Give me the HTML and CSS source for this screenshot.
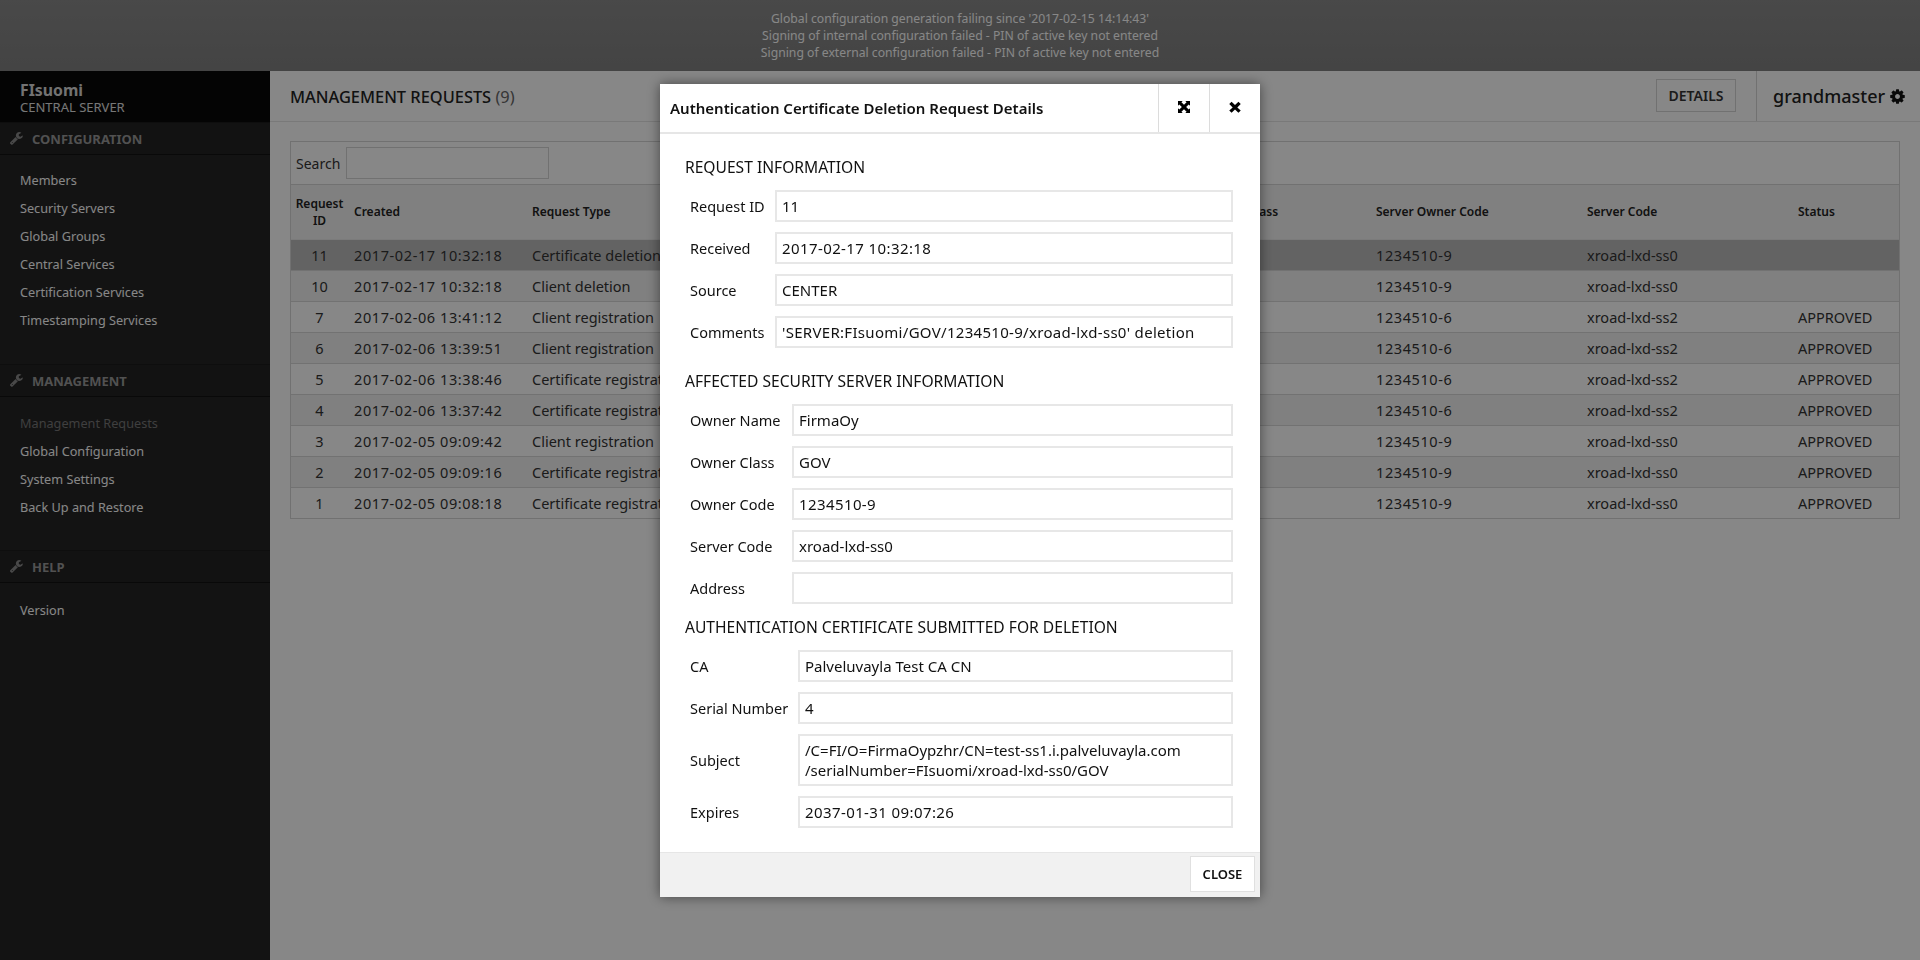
FILE: index.html
```html
<!DOCTYPE html>
<html lang="en">
<head>
  <meta charset="UTF-8" />
  <title>Management Requests</title>
  <link rel="stylesheet" href="styles.css">
</head>
<body>
  <div class="alerts">
    <div>Global configuration generation failing since '2017-02-15 14:14:43'</div>
    <div>Signing of internal configuration failed - PIN of active key not entered</div>
    <div>Signing of external configuration failed - PIN of active key not entered</div>
  </div>

  <div class="main">
    <aside class="sidebar">
      <div class="brand">
        <div class="brand-name">FIsuomi</div>
        <div class="brand-sub">CENTRAL SERVER</div>
      </div>

      <div class="nav-head">
        <svg class="wrench" viewBox="0 0 1664 1792"><path d="M363 1344q0-26-19-45t-45-19-45 19-19 45 19 45 45 19 45-19 19-45zm644-420l-682 682q-37 37-90 37-52 0-91-37l-106-108q-38-36-38-90 0-53 38-91l681-681q39 98 114.500 173.500t173.500 114.500zm634-435q0 39-23 106-47 134-164.500 217.500t-258.500 83.500q-185 0-316.500-131.500t-131.500-316.500 131.500-316.500 316.500-131.500q58 0 121.500 16.500t107.500 46.500q16 11 16 28t-16 28l-293 169v224l193 107q5-3 79-48.500t135.500-81 70.500-35.500q15 0 23.500 10t8.500 25z"/></svg>
        CONFIGURATION
      </div>
      <ul class="nav-list">
        <li>Members</li>
        <li>Security Servers</li>
        <li>Global Groups</li>
        <li>Central Services</li>
        <li>Certification Services</li>
        <li>Timestamping Services</li>
      </ul>

      <div class="nav-head">
        <svg class="wrench" viewBox="0 0 1664 1792"><path d="M363 1344q0-26-19-45t-45-19-45 19-19 45 19 45 45 19 45-19 19-45zm644-420l-682 682q-37 37-90 37-52 0-91-37l-106-108q-38-36-38-90 0-53 38-91l681-681q39 98 114.500 173.500t173.500 114.500zm634-435q0 39-23 106-47 134-164.500 217.500t-258.500 83.500q-185 0-316.500-131.500t-131.500-316.500 131.500-316.500 316.500-131.500q58 0 121.500 16.500t107.500 46.500q16 11 16 28t-16 28l-293 169v224l193 107q5-3 79-48.500t135.500-81 70.500-35.500q15 0 23.500 10t8.500 25z"/></svg>
        MANAGEMENT
      </div>
      <ul class="nav-list nav-mgmt">
        <li class="current">Management Requests</li>
        <li>Global Configuration</li>
        <li>System Settings</li>
        <li>Back Up and Restore</li>
      </ul>

      <div class="nav-head">
        <svg class="wrench" viewBox="0 0 1664 1792"><path d="M363 1344q0-26-19-45t-45-19-45 19-19 45 19 45 45 19 45-19 19-45zm644-420l-682 682q-37 37-90 37-52 0-91-37l-106-108q-38-36-38-90 0-53 38-91l681-681q39 98 114.500 173.500t173.500 114.500zm634-435q0 39-23 106-47 134-164.500 217.500t-258.500 83.500q-185 0-316.500-131.500t-131.500-316.500 131.500-316.500 316.500-131.500q58 0 121.500 16.500t107.500 46.500q16 11 16 28t-16 28l-293 169v224l193 107q5-3 79-48.500t135.500-81 70.500-35.500q15 0 23.500 10t8.500 25z"/></svg>
        HELP
      </div>
      <ul class="nav-list nav-help">
        <li>Version</li>
      </ul>
    </aside>

    <div class="content">
      <header class="content-head">
        <h1 class="page-title">MANAGEMENT REQUESTS <span class="count">(9)</span></h1>
        <button class="details-btn" type="button">DETAILS</button>
        <div class="user">
          grandmaster
          <svg class="gear" viewBox="0 0 1792 1792"><path d="M1152 896q0-106-75-181t-181-75-181 75-75 181 75 181 181 75 181-75 75-181zm512-109v222q0 12-8 23t-20 13l-185 28q-19 54-39 91 35 50 107 138 10 12 10 25t-9 23q-27 37-99 108t-94 71q-12 0-26-9l-138-108q-44 23-91 38-16 136-29 186-7 28-36 28h-222q-14 0-24.500-8.500t-11.500-21.500l-28-184q-49-16-90-37l-141 107q-10 9-25 9-14 0-25-11-126-114-165-168-7-10-7-23 0-12 8-23 15-21 51-66.500t54-70.500q-27-50-41-99l-183-27q-13-2-21-12.500t-8-23.500v-222q0-12 8-23t19-13l186-28q14-46 39-92-40-57-107-138-10-12-10-24 0-10 9-23 26-36 98.500-107.500t94.500-71.500q13 0 26 10l138 107q44-23 91-38 16-136 29-186 7-28 36-28h222q14 0 24.500 8.500t11.500 21.500l28 184q49 16 90 37l142-107q9-9 24-9 13 0 25 10 129 119 165 170 7 8 7 22 0 12-8 23-15 21-51 66.500t-54 70.500q26 50 41 98l183 28q13 2 21 12.500t8 23.500z"/></svg>
        </div>
      </header>

      <div class="panel">
        <div class="search-row">
          <label for="search">Search</label>
          <input id="search" class="search-input" type="text" />
        </div>
        <table class="requests">
          <colgroup>
            <col class="col-id"><col class="col-created"><col class="col-type"><col class="col-name"><col class="col-class"><col class="col-owner"><col class="col-server"><col class="col-status">
          </colgroup>
          <thead>
            <tr>
              <th class="id">Request ID</th><th>Created</th><th>Request Type</th><th>Server Owner Name</th><th>Server Owner Class</th><th>Server Owner Code</th><th>Server Code</th><th>Status</th>
            </tr>
          </thead>
          <tbody>
            <tr class="selected"><td class="id">11</td><td class="num">2017-02-17 10:32:18</td><td>Certificate deletion</td><td>FirmaOy</td><td>GOV</td><td class="num">1234510-9</td><td>xroad-lxd-ss0</td><td></td></tr>
            <tr><td class="id">10</td><td class="num">2017-02-17 10:32:18</td><td>Client deletion</td><td>FirmaOy</td><td>GOV</td><td class="num">1234510-9</td><td>xroad-lxd-ss0</td><td></td></tr>
            <tr><td class="id">7</td><td class="num">2017-02-06 13:41:12</td><td>Client registration</td><td>FirmaOy</td><td>GOV</td><td class="num">1234510-6</td><td>xroad-lxd-ss2</td><td>APPROVED</td></tr>
            <tr><td class="id">6</td><td class="num">2017-02-06 13:39:51</td><td>Client registration</td><td>FirmaOy</td><td>GOV</td><td class="num">1234510-6</td><td>xroad-lxd-ss2</td><td>APPROVED</td></tr>
            <tr><td class="id">5</td><td class="num">2017-02-06 13:38:46</td><td>Certificate registration</td><td>FirmaOy</td><td>GOV</td><td class="num">1234510-6</td><td>xroad-lxd-ss2</td><td>APPROVED</td></tr>
            <tr><td class="id">4</td><td class="num">2017-02-06 13:37:42</td><td>Certificate registration</td><td>FirmaOy</td><td>GOV</td><td class="num">1234510-6</td><td>xroad-lxd-ss2</td><td>APPROVED</td></tr>
            <tr><td class="id">3</td><td class="num">2017-02-05 09:09:42</td><td>Client registration</td><td>FirmaOy</td><td>GOV</td><td class="num">1234510-9</td><td>xroad-lxd-ss0</td><td>APPROVED</td></tr>
            <tr><td class="id">2</td><td class="num">2017-02-05 09:09:16</td><td>Certificate registration</td><td>FirmaOy</td><td>GOV</td><td class="num">1234510-9</td><td>xroad-lxd-ss0</td><td>APPROVED</td></tr>
            <tr><td class="id">1</td><td class="num">2017-02-05 09:08:18</td><td>Certificate registration</td><td>FirmaOy</td><td>GOV</td><td class="num">1234510-9</td><td>xroad-lxd-ss0</td><td>APPROVED</td></tr>
          </tbody>
        </table>
      </div>
    </div>
  </div>

  <div class="overlay">
    <div class="dialog">
      <div class="dialog-head">
        <div class="dialog-title">Authentication Certificate Deletion Request Details</div>
        <button class="icon-btn" type="button">
          <svg class="icon" viewBox="0 0 14 14"><path d="M0 0h5.500L4 1.500 7 4.500l3-3L8.500 0H14v5.500L12.500 4l-3 3 3 3L14 8.500V14H8.500l1.500-1.500-3-3-3 3L5.500 14H0V8.500L1.500 10l3-3-3-3L0 5.500z"/></svg>
        </button>
        <button class="icon-btn" type="button">
          <svg class="icon" viewBox="0 0 14 14"><path d="M3 .8 7 4.800l4-4L13.700 3.500l-4 4 4 3.500L11 13.700l-4-3.900-4 3.900L.3 11l4-3.500-4-4z"/></svg>
        </button>
      </div>

      <div class="dialog-body">
        <h2 class="section-title first">REQUEST INFORMATION</h2>
        <div class="field-grid grid-a">
          <div class="field-label">Request ID</div><div class="field-value">11</div>
          <div class="field-label">Received</div><div class="field-value num">2017-02-17 10:32:18</div>
          <div class="field-label">Source</div><div class="field-value">CENTER</div>
          <div class="field-label">Comments</div><div class="field-value mixed">'SERVER:FIsuomi/GOV/1234510-9/xroad-lxd-ss0' deletion</div>
        </div>

        <h2 class="section-title">AFFECTED SECURITY SERVER INFORMATION</h2>
        <div class="field-grid grid-b">
          <div class="field-label">Owner Name</div><div class="field-value">FirmaOy</div>
          <div class="field-label">Owner Class</div><div class="field-value">GOV</div>
          <div class="field-label">Owner Code</div><div class="field-value num">1234510-9</div>
          <div class="field-label">Server Code</div><div class="field-value">xroad-lxd-ss0</div>
          <div class="field-label">Address</div><div class="field-value"></div>
        </div>

        <h2 class="section-title">AUTHENTICATION CERTIFICATE SUBMITTED FOR DELETION</h2>
        <div class="field-grid grid-c">
          <div class="field-label">CA</div><div class="field-value">Palveluvayla Test CA CN</div>
          <div class="field-label">Serial Number</div><div class="field-value">4</div>
          <div class="field-label">Subject</div><div class="field-value tall">/C=FI/O=FirmaOypzhr/CN=test-ss1.i.palveluvayla.com<br>/serialNumber=FIsuomi/xroad-lxd-ss0/GOV</div>
          <div class="field-label">Expires</div><div class="field-value num">2037-01-31 09:07:26</div>
        </div>
      </div>

      <div class="dialog-foot">
        <button class="close-btn" type="button">CLOSE</button>
      </div>
    </div>
  </div>
</body>
</html>
```

FILE: styles.css
```css
* {
  box-sizing: border-box;
}
html, body {
  height: 100%;
}
body {
  margin: 0;
  height: 960px;
  overflow: hidden;
  font-family: "Noto Sans", sans-serif;
  font-size: 14px;
  color: #333;
  background: #fff;
  display: flex;
  flex-direction: column;
}

/* top alerts */
.alerts {
  height: 71px;
  padding-top: 10px;
  background: linear-gradient(#8a8a8a, #808080);
  color: #fff;
  text-align: center;
  font-size: 12.2px;
  line-height: 17px;
}

.main {
  flex: 1;
  display: flex;
  min-height: 0;
}

/* sidebar */
.sidebar {
  width: 270px;
  background: #252525;
  flex-shrink: 0;
}
.brand {
  height: 51px;
  padding: 9px 20px 0;
  background: #080808;
  color: #fff;
}
.brand-name {
  font-size: 15.8px;
  font-weight: 700;
  line-height: 20px;
  color: #d8d8d8;
}
.brand-sub {
  font-size: 13px;
  line-height: 15px;
  color: #e0e0e0;
}
.nav-head {
  height: 33px;
  display: flex;
  align-items: center;
  gap: 9px;
  padding-left: 10px;
  border-bottom: 1px solid #111;
  border-top: 1px solid #1b1b1b;
  background: #222;
  color: #9a9a9a;
  font-size: 13px;
  font-weight: 700;
}
.wrench {
  width: 13px;
  height: 14px;
  fill: #8a8a8a;
}
.nav-list {
  list-style: none;
  margin: 0;
  padding: 11px 0 30px 20px;
}
.nav-mgmt {
  padding-top: 12px;
  padding-bottom: 29px;
}
.nav-help {
  padding-top: 13px;
}
.nav-list li {
  height: 28px;
  line-height: 28px;
  font-size: 12.7px;
  color: #fff;
}
.nav-list li.current {
  color: #777;
}

/* content */
.content {
  flex: 1;
  min-width: 0;
}
.content-head {
  height: 51px;
  display: flex;
  align-items: center;
  padding-left: 20px;
  border-bottom: 1px solid #e4e4e4;
  background: #fff;
}
.page-title {
  margin: 0;
  flex: 1;
  font-size: 16.4px;
  font-weight: 500;
  color: #222;
}
.count {
  font-weight: 400;
  color: #666;
}
.details-btn {
  width: 80px;
  height: 33px;
  margin: 0 20px 1px 0;
  border: 1px solid #d5d5d5;
  background: #fff;
  font: 600 14px "Noto Sans", sans-serif;
  color: #333;
}
.user {
  width: 164px;
  height: 50px;
  display: flex;
  align-items: center;
  gap: 4px;
  padding-left: 16px;
  border-left: 1px solid #d5d5d5;
  font-size: 18px;
  font-weight: 500;
  color: #222;
}
.gear {
  width: 17px;
  height: 17px;
  fill: #111;
}
.panel {
  margin: 19px 20px 0 20px;
  border: 1px solid #d5d5d5;
}
.search-row {
  height: 43px;
  display: flex;
  align-items: center;
  gap: 6px;
  padding-left: 5px;
  border-bottom: 1px solid #d5d5d5;
}
.search-input {
  width: 203px;
  height: 32px;
  border: 1px solid #d5d5d5;
  background: #fff;
}
.requests {
  width: 100%;
  table-layout: fixed;
  border-collapse: collapse;
}
.col-id { width: 57px; }
.col-created { width: 178px; }
.col-type { width: 422px; }
.col-name { width: 211px; }
.col-class { width: 211px; }
.col-owner { width: 211px; }
.col-server { width: 211px; }
.requests th {
  height: 54px;
  padding: 0 6px;
  text-align: left;
  font-size: 12px;
  font-weight: 600;
  line-height: 17px;
  color: #222;
  background: #f2f2f2;
  border-bottom: 1px solid #e8e8e8;
}
.requests td {
  height: 31px;
  padding: 0 6px;
  font-size: 14.5px;
  white-space: nowrap;
  border-top: 1px solid #d8d8d8;
  overflow: hidden;
}
.requests td.num {
  letter-spacing: 0.6px;
}
.requests tbody tr:nth-child(even) {
  background: #f1f1f1;
}
.requests tr.selected {
  background: #bcbcbc;
}
.requests .id {
  text-align: center;
  padding: 0;
}

/* modal */
.overlay {
  position: fixed;
  top: 0;
  left: 0;
  right: 0;
  bottom: 0;
  background: rgba(0, 0, 0, 0.47);
  display: flex;
  justify-content: center;
  align-items: flex-start;
  padding-top: 84px;
}
.dialog {
  width: 600px;
  background: #fff;
  color: #111;
  box-shadow: 0 0 12px rgba(0, 0, 0, 0.5);
}
.dialog-head {
  height: 50px;
  display: flex;
  align-items: stretch;
  border-bottom: 2px solid #e6e6e6;
}
.dialog-title {
  flex: 1;
  align-self: center;
  padding-left: 10px;
  font-size: 15px;
  font-weight: 600;
}
.icon-btn {
  width: 51px;
  border: 0;
  border-left: 1px solid #dcdcdc;
  background: #fff;
  padding: 0;
}
.icon {
  width: 12px;
  height: 12px;
  fill: #000;
}
.dialog-body {
  padding: 0 27px 24px 25px;
}
.section-title {
  margin: 23px 0 13px;
  height: 20px;
  line-height: 20px;
  font-size: 15.6px;
  font-weight: 400;
}
.grid-b + .section-title {
  margin-top: 13px;
}
.field-grid {
  display: grid;
  row-gap: 10px;
  align-items: center;
}
.grid-a { grid-template-columns: 90px 1fr; }
.grid-b { grid-template-columns: 107px 1fr; }
.grid-c { grid-template-columns: 113px 1fr; }
.field-label {
  padding-left: 5px;
  font-size: 14.5px;
  white-space: nowrap;
}
.field-value {
  height: 32px;
  padding: 4px 5px;
  font-size: 15px;
  line-height: 20px;
  border: 2px solid #e7e7e7;
  white-space: nowrap;
}
.field-value.num {
  letter-spacing: 0.4px;
}
.field-value.mixed {
  letter-spacing: 0.3px;
}
.field-value.tall {
  height: 52px;
}
.dialog-foot {
  height: 45px;
  padding: 3px 5px 0 0;
  border-top: 1px solid #e6e6e6;
  background: #f1f1f1;
  display: flex;
  justify-content: flex-end;
  align-items: flex-start;
}
.close-btn {
  width: 65px;
  height: 36px;
  border: 1px solid #e0e0e0;
  background: #fff;
  font: 600 13px "Noto Sans", sans-serif;
  color: #111;
}
```
